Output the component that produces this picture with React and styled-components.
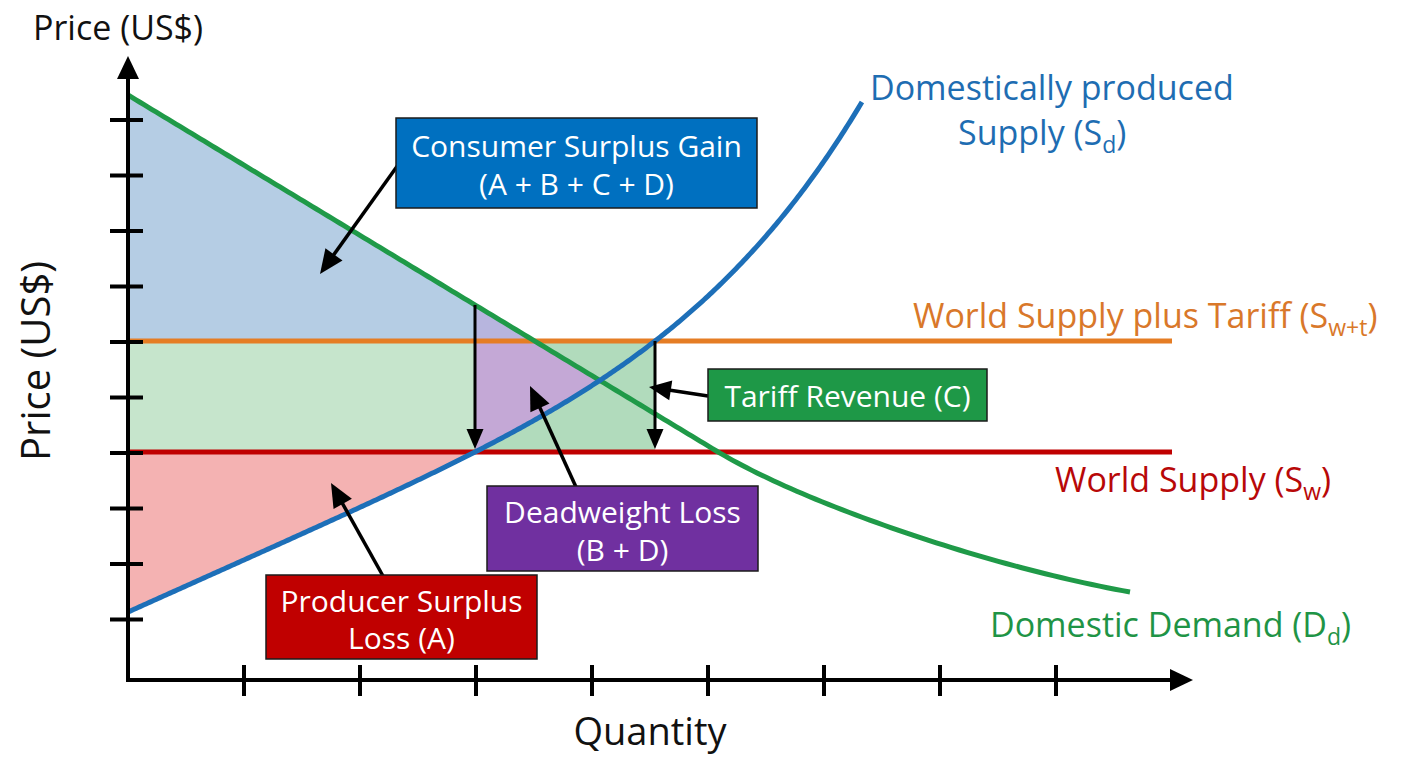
import React from "react";
import styled, { createGlobalStyle } from "styled-components";

const GlobalStyle = createGlobalStyle`
  html, body { margin: 0; padding: 0; background: #ffffff; }
  body { font-family: "Open Sans", "Noto Sans", sans-serif; }
`;

const Page = styled.div`
  width: 1408px;
  height: 768px;
  background: #ffffff;
  overflow: hidden;
`;

const Chart = styled.svg`
  display: block;
  width: 1408px;
  height: 768px;
`;

const AxisLine = styled.line`
  stroke: #000;
  stroke-width: 4;
`;

const Tick = styled.line`
  stroke: #000;
  stroke-width: 4;
`;

const Head = styled.polygon`
  fill: #000;
`;

const Region = styled.polygon`
  fill: ${(p) => p.$fill};
`;

const Level = styled.line`
  stroke: ${(p) => p.$color};
  stroke-width: 5;
`;

const Curve = styled.polyline`
  fill: none;
  stroke: ${(p) => p.$color};
  stroke-width: 5;
  stroke-linejoin: round;
`;

const PointerLine = styled.line`
  stroke: #000;
  stroke-width: ${(p) => p.$w || 3.5};
`;

const Label = styled.text`
  font-family: "Open Sans", "Noto Sans", sans-serif;
  font-size: ${(p) => p.$size}px;
  fill: ${(p) => p.$color};
`;

const CalloutBox = styled.rect`
  fill: ${(p) => p.$fill};
  stroke: #1b1b1b;
  stroke-width: 1.5;
`;

const CalloutText = styled.text`
  font-family: "Open Sans", "Noto Sans", sans-serif;
  font-size: 30px;
  fill: #ffffff;
  text-anchor: middle;
`;

/* ---------- geometry ---------- */
const X0 = 128;
const ORANGE_Y = 341;
const RED_Y = 452;

const supplyY = (x) => {
  const u = x - X0;
  return 612 - 0.4488 * u - 8.48e-13 * Math.pow(u, 5);
};

// demand: straight line then a bezier flattening out
const demandLinY = (x) => 95 + 0.605 * (x - X0);
const bez = (p0, p1, p2, p3, t) => {
  const m = 1 - t;
  return m * m * m * p0 + 3 * m * m * t * p1 + 3 * m * t * t * p2 + t * t * t * p3;
};
const demandPoints = (() => {
  const pts = [];
  for (let x = X0; x <= 720; x += 4) pts.push([x, demandLinY(x)]);
  for (let i = 1; i <= 60; i++) {
    const t = i / 60;
    pts.push([bez(720, 800, 980, 1130, t), bez(453, 501, 565, 592, t)]);
  }
  return pts;
})();

const bisect = (f, a, b) => {
  let lo = a, hi = b;
  const flo = f(lo);
  for (let i = 0; i < 60; i++) {
    const mid = (lo + hi) / 2;
    if (Math.sign(f(mid)) === Math.sign(flo)) lo = mid; else hi = mid;
  }
  return (lo + hi) / 2;
};

const xSupplyTop = bisect((x) => supplyY(x) - 102, 700, 900);
const xSupplyRed = bisect((x) => supplyY(x) - RED_Y, 300, 600);
const xCross = bisect((x) => supplyY(x) - demandLinY(x), 500, 700);
const xDemandOrange = bisect((x) => demandLinY(x) - ORANGE_Y, 300, 700);

const supplyRange = (a, b, step = 2) => {
  const pts = [];
  const dir = a < b ? 1 : -1;
  for (let x = a; dir > 0 ? x < b : x > b; x += step * dir) pts.push([x, supplyY(x)]);
  pts.push([b, supplyY(b)]);
  return pts;
};

const toStr = (pts) => pts.map(([x, y]) => `${x.toFixed(2)},${y.toFixed(2)}`).join(" ");

const supplyPts = supplyRange(X0, xSupplyTop);

const bluePoly = [[X0, 95], [xDemandOrange, ORANGE_Y], [X0, ORANGE_Y]];
const purpleTop = [[475, demandLinY(475)], [xDemandOrange, ORANGE_Y], [475, ORANGE_Y]];
const purpleBottom = [
  [475, ORANGE_Y],
  [xDemandOrange, ORANGE_Y],
  [xCross, demandLinY(xCross)],
  ...supplyRange(xCross, xSupplyRed),
  [475, RED_Y],
];
const redPoly = [[X0, RED_Y], [xSupplyRed, RED_Y], ...supplyRange(xSupplyRed, X0)];

const yTicks = Array.from({ length: 10 }, (_, i) => 120 + i * 55.5);
const xTicks = Array.from({ length: 8 }, (_, i) => 244 + i * 116);

function Arrow({ x1, y1, x2, y2, len = 21, half = 9, w = 3.5 }) {
  const dx = x2 - x1;
  const dy = y2 - y1;
  const d = Math.hypot(dx, dy);
  const ux = dx / d;
  const uy = dy / d;
  const bx = x2 - ux * len;
  const by = y2 - uy * len;
  const px = -uy * half;
  const py = ux * half;
  return (
    <g>
      <PointerLine x1={x1} y1={y1} x2={bx + ux * 2} y2={by + uy * 2} $w={w} />
      <Head points={`${x2},${y2} ${bx + px},${by + py} ${bx - px},${by - py}`} />
    </g>
  );
}

function Callout({ x, y, w, h, fill, lines, baselines }) {
  const cx = x + w / 2;
  return (
    <g>
      <CalloutBox x={x} y={y} width={w} height={h} $fill={fill} />
      {lines.map((t, i) => (
        <CalloutText key={i} x={cx} y={baselines[i]}>
          {t}
        </CalloutText>
      ))}
    </g>
  );
}

export default function App() {
  return (
    <Page>
      <GlobalStyle />
      <Chart viewBox="0 0 1408 768" xmlns="http://www.w3.org/2000/svg">
        {/* shaded areas */}
        <Region points={toStr(bluePoly)} $fill="#b5cde4" />
        <Region points={`${X0},${ORANGE_Y} 475,${ORANGE_Y} 475,${RED_Y} ${X0},${RED_Y}`} $fill="#c6e5cc" />
        <Region points={`475,${ORANGE_Y} 655,${ORANGE_Y} 655,${RED_Y} 475,${RED_Y}`} $fill="#b1dbbc" />
        <Region points={toStr(purpleTop)} $fill="#b7b5de" />
        <Region points={toStr(purpleBottom)} $fill="#c4a8d6" />
        <Region points={toStr(redPoly)} $fill="#f4b2b2" />

        {/* price levels */}
        <Level x1={X0} y1={ORANGE_Y} x2={1172} y2={ORANGE_Y} $color="#e57d24" />
        <Level x1={X0} y1={RED_Y} x2={1172} y2={RED_Y} $color="#c00000" />

        {/* curves */}
        <Curve points={toStr(demandPoints)} $color="#1f9a48" />
        <Curve points={toStr(supplyPts)} $color="#1d6fb8" />

        {/* vertical markers */}
        <Arrow x1={475} y1={demandLinY(475)} x2={475} y2={449} len={20} half={8.5} w={3} />
        <Arrow x1={655} y1={ORANGE_Y} x2={655} y2={449} len={20} half={8.5} w={3} />

        {/* axes */}
        <AxisLine x1={X0} y1={682} x2={X0} y2={76} />
        <Head points={`${X0},56 ${X0 - 11},79 ${X0 + 11},79`} />
        <AxisLine x1={126} y1={680} x2={1172} y2={680} />
        <Head points={`1193,680 1170,669 1170,691`} />
        {yTicks.map((y) => (
          <Tick key={y} x1={110} y1={y} x2={143} y2={y} />
        ))}
        {xTicks.map((x) => (
          <Tick key={x} x1={x} y1={665} x2={x} y2={696} />
        ))}

        {/* axis labels */}
        <Label x={33} y={40} $size={34} $color="#111">Price (US$)</Label>
        <Label x={50} y={361} $size={40} $color="#111" textAnchor="middle" transform="rotate(-90 50 361)">
          Price (US$)
        </Label>
        <Label x={650} y={745} $size={38} $color="#111" textAnchor="middle">Quantity</Label>

        {/* curve labels */}
        <Label x={870} y={100} $size={34} $color="#1e6db2">Domestically produced</Label>
        <Label x={958} y={145} $size={34} $color="#1e6db2">
          Supply (S<tspan dy="8" fontSize="23">d</tspan><tspan dy="-8">)</tspan>
        </Label>
        <Label x={913} y={328} $size={34} $color="#d9782a">
          World Supply plus Tariff (S<tspan dy="8" fontSize="23">w+t</tspan><tspan dy="-8">)</tspan>
        </Label>
        <Label x={1055} y={492} $size={34} $color="#b80808">
          World Supply (S<tspan dy="8" fontSize="23">w</tspan><tspan dy="-8">)</tspan>
        </Label>
        <Label x={990} y={637} $size={34} $color="#1f9446">
          Domestic Demand (D<tspan dy="8" fontSize="23">d</tspan><tspan dy="-8">)</tspan>
        </Label>

        {/* callout pointers */}
        <Arrow x1={398} y1={165} x2={320} y2={274} len={24} half={10.5} />
        <Arrow x1={708} y1={396} x2={649} y2={387} len={22} half={10} />
        <Arrow x1={576} y1={487} x2={530} y2={386} len={24} half={10.5} />
        <Arrow x1={383} y1={576} x2={331} y2={483} len={24} half={10.5} />

        {/* callouts */}
        <Callout x={396} y={118} w={361} h={90} fill="#0070c0"
          lines={["Consumer Surplus Gain", "(A + B + C + D)"]} baselines={[157, 195]} />
        <Callout x={708} y={369} w={279} h={52} fill="#1e9847"
          lines={["Tariff Revenue (C)"]} baselines={[407]} />
        <Callout x={487} y={486} w={271} h={85} fill="#7030a0"
          lines={["Deadweight Loss", "(B + D)"]} baselines={[523, 561]} />
        <Callout x={266} y={575} w={271} h={84} fill="#c00000"
          lines={["Producer Surplus", "Loss (A)"]} baselines={[612, 649]} />
      </Chart>
    </Page>
  );
}
